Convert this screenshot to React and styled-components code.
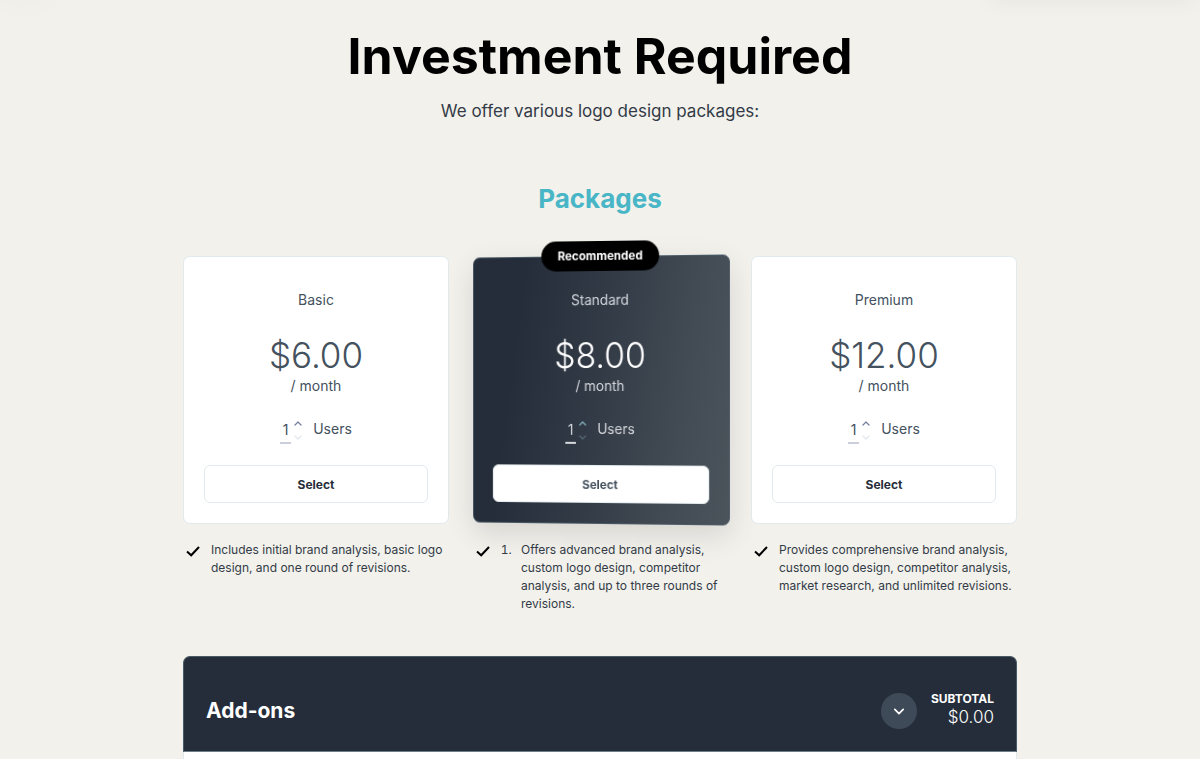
import { useState } from 'react';
import styled, { createGlobalStyle, css } from 'styled-components';

const headingFont = '"Inter", "Liberation Sans", sans-serif';
const bodyFont = '"Inter", "Liberation Sans", sans-serif';

const packages = [
  {
    name: 'Basic',
    price: '$6.00',
    text: 'Includes initial brand analysis, basic logo design, and one round of revisions.',
  },
  {
    name: 'Standard',
    price: '$8.00',
    text: 'Offers advanced brand analysis, custom logo design, competitor analysis, and up to three rounds of revisions.',
    featured: true,
  },
  {
    name: 'Premium',
    price: '$12.00',
    text: 'Provides comprehensive brand analysis, custom logo design, competitor analysis, market research, and unlimited revisions.',
  },
];

const Chevron = ({ up, size = 8, width = 1.3 }) => (
  <svg width={size} height={size / 2 + 1} viewBox="0 0 8 5" fill="none" stroke="currentColor" strokeWidth={width} strokeLinecap="round" strokeLinejoin="round" aria-hidden="true">
    <path d={up ? 'M1 4 4 1l3 3' : 'M1 1l3 3 3-3'} />
  </svg>
);

const Check = () => (
  <CheckIcon viewBox="0 0 14 11" aria-hidden="true">
    <path d="M1 5.500 5.200 9.300 13 1" />
  </CheckIcon>
);

const PackageCard = ({ item }) => {
  const [users, setUsers] = useState(1);
  const { name, price, featured } = item;
  const inputId = `users-${name}`;

  return (
    <CardScene>
      <Card $featured={featured}>
        {featured && <Badge>Recommended</Badge>}
        <Name>{name}</Name>
        <Price $featured={featured}>{price}</Price>
        <Period>/ month</Period>
        <UserRow>
          <UserInput
            id={inputId}
            type="text"
            inputMode="numeric"
            value={users}
            $featured={featured}
            onChange={(e) => setUsers(Number(e.target.value) || 1)}
          />
          <Stepper $featured={featured}>
            <button type="button" aria-label="Add user" onClick={() => setUsers(users + 1)}>
              <Chevron up />
            </button>
            <button type="button" aria-label="Remove user" disabled={users <= 1} onClick={() => setUsers(users - 1)}>
              <Chevron />
            </button>
          </Stepper>
          <label htmlFor={inputId}>Users</label>
        </UserRow>
        <SelectButton type="button" $featured={featured}>Select</SelectButton>
      </Card>
    </CardScene>
  );
};

const App = () => {
  const [open, setOpen] = useState(false);

  return (
    <>
      <GlobalStyle />
      <Page>
        <TopShade $side="left" />
        <TopShade $side="right" />
        <Title>Investment Required</Title>
        <Intro>We offer various logo design packages:</Intro>
        <SubTitle>Packages</SubTitle>

        <PackageGrid>
          {packages.map((item) => (
            <Column key={item.name}>
              <PackageCard item={item} />
              <Feature $featured={item.featured}>
                <Check />
                {item.featured ? (
                  <ol>
                    <li>{item.text}</li>
                  </ol>
                ) : (
                  <p>{item.text}</p>
                )}
              </Feature>
            </Column>
          ))}
        </PackageGrid>

        <AddOns>
          <AddOnsHeader>
            <AddOnsTitle>Add-ons</AddOnsTitle>
            <ToggleButton type="button" aria-label="Toggle add-ons" aria-expanded={open} onClick={() => setOpen(!open)}>
              <Chevron up={open} size={12} width={1.2} />
            </ToggleButton>
            <Subtotal>
              <SubtotalLabel>SUBTOTAL</SubtotalLabel>
              <SubtotalValue>$0.00</SubtotalValue>
            </Subtotal>
          </AddOnsHeader>
          <AddOnsBody />
        </AddOns>
      </Page>
    </>
  );
};

export default App;

const GlobalStyle = createGlobalStyle`
  * {
    box-sizing: border-box;
    margin: 0;
    padding: 0;
  }

  body {
    background-color: #f2f1ec;
    color: #333b47;
    font-family: ${bodyFont};
  }

  button, input {
    font-family: inherit;
    color: inherit;
    background: none;
    border: none;
  }
`;

const Page = styled.main`
  position: relative;
  display: flex;
  flex-direction: column;
  align-items: center;
  min-height: 100vh;
  padding: 26px 24px 0;
  overflow: hidden;
`;

const TopShade = styled.div`
  position: absolute;
  top: -22px;
  height: 20px;
  box-shadow: 0 0 24px rgba(0, 0, 0, 0.07);

  ${({ $side }) =>
    $side === 'left'
      ? css`
          left: 0;
          width: 44px;
          opacity: 0.3;
        `
      : css`
          right: 8px;
          width: 200px;
        `}
`;

const Title = styled.h1`
  font-family: ${headingFont};
  font-size: 50px;
  font-weight: 700;
  line-height: 60px;
  color: #000;
`;

const Intro = styled.p`
  margin-top: 13px;
  font-size: 17px;
  line-height: 24px;
`;

const SubTitle = styled.h2`
  margin-top: 58px;
  font-family: ${headingFont};
  font-size: 26px;
  font-weight: 700;
  line-height: 36px;
  color: #48b6c6;
`;

const PackageGrid = styled.div`
  display: grid;
  grid-template-columns: repeat(3, 1fr);
  gap: 18px;
  width: 100%;
  max-width: 834px;
  margin-top: 39px;
`;

const Column = styled.div`
  display: flex;
  flex-direction: column;
`;

const CardScene = styled.div`
  perspective: 3000px;
`;

const Card = styled.article`
  position: relative;
  display: flex;
  flex-direction: column;
  align-items: center;
  padding: 33px 20px 20px;
  border: 1px solid #e1e9ec;
  border-radius: 7px;
  background-color: #fff;
  color: #44515e;
  font-size: 14px;
  line-height: 20px;

  ${({ $featured }) =>
    $featured &&
    css`
      border-color: #4a5966;
      background: linear-gradient(98deg, #252d3a 18%, #333b47 50%, #434b54 80%, #4b535b 100%);
      color: #d5d8dc;
      box-shadow: 0 10px 30px rgba(0, 0, 0, 0.12);
      transform: rotateY(-15deg);
    `}
`;

const Badge = styled.span`
  position: absolute;
  top: -16px;
  left: 50%;
  padding: 5px 17px;
  border-radius: 15px;
  background-color: #000;
  color: #fff;
  font-size: 12px;
  font-weight: 700;
  transform: translateX(-50%);
`;

const Name = styled.h3`
  font-size: 14px;
  font-weight: 400;
`;

const Price = styled.p`
  margin-top: 24px;
  font-size: 35px;
  font-weight: 300;
  line-height: 42px;
  color: ${({ $featured }) => ($featured ? '#fff' : '#44515e')};
`;

const Period = styled.p`
  font-size: 14px;
`;

const UserRow = styled.div`
  display: flex;
  align-items: flex-start;
  height: 28px;
  margin: 21px 0 20px;

  & label {
    margin-left: 10px;
    line-height: 24px;
  }
`;

const UserInput = styled.input`
  width: 11px;
  height: 27px;
  padding-bottom: 1px;
  border-bottom: 2px solid ${({ $featured }) => ($featured ? '#d5d8dc' : '#cbd0dc')};
  font-size: 14px;
  text-align: center;
`;

const Stepper = styled.div`
  display: flex;
  flex-direction: column;
  gap: 2px;
  margin-left: 2px;

  & button {
    display: flex;
    align-items: center;
    justify-content: center;
    width: 10px;
    height: 12px;
    color: ${({ $featured }) => ($featured ? '#84aebb' : '#7680a0')};
    cursor: pointer;
  }

  & button:disabled {
    color: ${({ $featured }) => ($featured ? '#566873' : '#e1e7ec')};
    cursor: default;
  }
`;

const SelectButton = styled.button`
  width: 100%;
  height: 38px;
  border: 1px solid #e4ebee;
  border-radius: 6px;
  background-color: #fff;
  color: ${({ $featured }) => ($featured ? '#44515e' : '#252d3a')};
  font-size: 12px;
  font-weight: 700;
  cursor: pointer;
`;

const Feature = styled.div`
  display: flex;
  align-items: flex-start;
  gap: 11px;
  margin-top: 17px;
  padding-left: ${({ $featured }) => ($featured ? '9px' : '3px')};
  font-size: 12px;
  line-height: 18px;

  & ol {
    padding-left: 14px;
  }

  & li {
    padding-left: 6px;
  }
`;

const CheckIcon = styled.svg`
  flex: none;
  width: 14px;
  height: 11px;
  margin-top: 5px;
  fill: none;
  stroke: #000;
  stroke-width: 2;
`;

const AddOns = styled.section`
  display: flex;
  flex: 1;
  flex-direction: column;
  width: 100%;
  max-width: 834px;
  margin-top: 43px;
`;

const AddOnsHeader = styled.header`
  display: flex;
  align-items: flex-start;
  padding: 36px 22px 22px;
  border: 1px solid #4a5966;
  border-bottom-color: #6f7f8a;
  border-radius: 7px 7px 0 0;
  background-color: #252d3a;
  color: #fff;
`;

const AddOnsTitle = styled.h2`
  flex: 1;
  font-family: ${headingFont};
  font-size: 21px;
  font-weight: 700;
  line-height: 36px;
`;

const ToggleButton = styled.button`
  display: flex;
  align-items: center;
  justify-content: center;
  width: 36px;
  height: 36px;
  border-radius: 50%;
  background-color: #3e4a57;
  color: #fff;
  cursor: pointer;
`;

const Subtotal = styled.div`
  margin-left: 14px;
  text-align: right;
`;

const SubtotalLabel = styled.p`
  font-size: 12px;
  font-weight: 700;
  line-height: 12px;
`;

const SubtotalValue = styled.p`
  font-size: 17px;
  font-weight: 300;
  line-height: 24px;
`;

const AddOnsBody = styled.div`
  flex: 1;
  border: 1px solid #e1e9ec;
  border-width: 0 1px;
  background-color: #fff;
`;
